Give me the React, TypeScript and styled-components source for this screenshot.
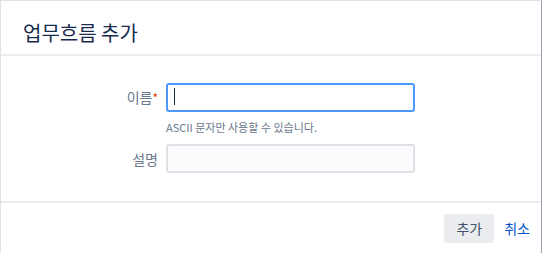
import React from "react";
import styled, { createGlobalStyle } from "styled-components";

const Global = createGlobalStyle`
  html, body { margin: 0; padding: 0; background: #fff; }
  body { font-family: "Noto Sans CJK KR", "Noto Sans", sans-serif; color: #172b4d; }
  * { box-sizing: border-box; }
`;

const Dialog = styled.div`
  width: 542px;
  height: 253px;
  border-top: 1px solid #dfe1e6;
  border-left: 1px solid #dfe1e6;
  border-right: 1px solid #97a0af;
  display: flex;
  flex-direction: column;
  background: #fff;
`;

const Header = styled.div`
  height: 55px;
  flex: none;
  border-bottom: 2px solid #ebecf0;
  display: flex;
  align-items: center;
  padding: 10px 0 0 22px;
`;

const Title = styled.h2`
  margin: 0;
  font-size: 20px;
  font-weight: 400;
  color: #172b4d;
  line-height: 1;
`;

const Body = styled.div`
  flex: 1;
  padding: 27px 0 0 0;
  border-bottom: 2px solid #ebecf0;
`;

const Form = styled.div`
  display: grid;
  grid-template-columns: 157px 249px;
  column-gap: 8px;
  align-items: center;
`;

const Label = styled.label`
  text-align: right;
  font-size: 14px;
  color: #6b778c;
  line-height: 28px;
`;

const Req = styled.span`
  color: #de350b;
  font-size: 12px;
`;

const Input = styled.input<{ $focused?: boolean }>`
  height: 29px;
  width: 249px;
  border: 2px solid ${(p) => (p.$focused ? "#4c9aff" : "#dfe1e6")};
  border-radius: 3px;
  background: ${(p) => (p.$focused ? "#fff" : "#fafbfc")};
  outline: none;
  padding: 0 6px;
  font-family: inherit;
  font-size: 14px;
`;

const Caret = styled.span`
  position: absolute;
  left: 8px;
  top: 5px;
  width: 1px;
  height: 17px;
  background: #172b4d;
`;

const Field = styled.div`
  position: relative;
`;

const Help = styled.div`
  grid-column: 2;
  font-size: 11px;
  color: #6b778c;
  padding: 8px 0 10px 0;
  line-height: 14px;
`;

const Footer = styled.div`
  height: 50px;
  flex: none;
  display: flex;
  align-items: center;
  justify-content: flex-end;
  padding-right: 11px;
  gap: 10px;
`;

const Button = styled.button`
  height: 29px;
  padding: 0 12px;
  border: none;
  border-radius: 3px;
  background: #ebecf0;
  color: #42526e;
  font-family: inherit;
  font-size: 14px;
`;

const LinkBtn = styled.button`
  border: none;
  background: none;
  padding: 0;
  color: #0052cc;
  font-family: inherit;
  font-size: 14px;
`;

export default function App() {
  return (
    <>
      <Global />
      <Dialog>
        <Header>
          <Title>업무흐름 추가</Title>
        </Header>
        <Body>
          <Form>
            <Label>
              이름<Req>*</Req>
            </Label>
            <Field>
              <Input $focused />
              <Caret />
            </Field>
            <Help>ASCII 문자만 사용할 수 있습니다.</Help>
            <Label>설명</Label>
            <Field>
              <Input />
            </Field>
          </Form>
        </Body>
        <Footer>
          <Button>추가</Button>
          <LinkBtn>취소</LinkBtn>
        </Footer>
      </Dialog>
    </>
  );
}
